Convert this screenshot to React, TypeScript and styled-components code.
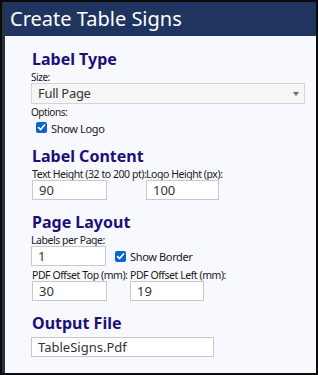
import React from "react";
import styled, { createGlobalStyle } from "styled-components";

const Global = createGlobalStyle`
  html, body { margin: 0; padding: 0; background: #000; }
  body { font-family: "Noto Sans", "Open Sans", sans-serif; }
  * { box-sizing: border-box; }
`;

const Frame = styled.div`
  width: 318px;
  height: 375px;
  border: 2px solid #0b0b0b;
  display: flex;
  background: #f8f9ff;
  overflow: hidden;
`;

const Strip = styled.div`
  width: 3px;
  flex: none;
  background: #27333e;
`;

const Main = styled.div`
  flex: 1;
  display: flex;
  flex-direction: column;
  min-width: 0;
`;

const Header = styled.header`
  height: 34px;
  background: #1f3560;
  color: #ffffff;
  font-size: 20px;
  line-height: 34px;
  padding-left: 5px;
  white-space: nowrap;
`;

const Body = styled.div`
  padding: 13px 11px 0 26px;
  display: flex;
  flex-direction: column;
`;

const Heading = styled.h2<{ $gap?: number }>`
  margin: ${(p) => p.$gap ?? 12}px 0 0 1px;
  font-size: 16px;
  line-height: 20px;
  font-weight: 700;
  color: #1c1078;
`;

const FieldLabel = styled.label<{ $small?: boolean }>`
  display: block;
  margin-top: 3px;
  font-family: "Noto Sans", sans-serif;
  font-size: ${(p) => (p.$small ? 10 : 10.5)}px;
  letter-spacing: -0.45px;
  line-height: 11px;
  color: #1a1a1a;
  white-space: nowrap;
`;

const SelectBox = styled.div`
  position: relative;
  height: 21px;
  border: 1px solid #d4d4d4;
  background: #f6f6f6;
  color: #333;
  font-size: 13px;
  letter-spacing: -0.3px;
  line-height: 19px;
  padding-left: 6px;
`;

const Arrow = styled.span`
  position: absolute;
  right: 5px;
  top: 8px;
  width: 0;
  height: 0;
  border-left: 3.5px solid transparent;
  border-right: 3.5px solid transparent;
  border-top: 4px solid #6b6b6b;
`;

const TextBox = styled.div<{ $w: number }>`
  width: ${(p) => p.$w}px;
  height: 20px;
  border: 1px solid #c9c9c9;
  background: #ffffff;
  color: #333;
  font-size: 13px;
  line-height: 18px;
  padding-left: 6px;
  white-space: nowrap;
`;

const CheckRow = styled.div<{ $indent?: number; $top?: number }>`
  display: flex;
  align-items: center;
  gap: 4px;
  margin-top: ${(p) => p.$top ?? 0}px;
  padding-left: ${(p) => p.$indent ?? 0}px;
`;

const Box = styled.span`
  width: 11px;
  height: 11px;
  border-radius: 2px;
  background: #0b63ce;
  display: flex;
  align-items: center;
  justify-content: center;
  flex: none;
`;

const CheckText = styled.span<{ $drop?: number }>`
  font-size: 11px;
  letter-spacing: -0.35px;
  line-height: 11px;
  color: #1a1a1a;
  padding-top: ${(p) => p.$drop ?? 0}px;
`;

const FieldRow = styled.div<{ $cols: string; $top?: number }>`
  display: grid;
  grid-template-columns: ${(p) => p.$cols};
  margin-top: ${(p) => p.$top ?? 0}px;
  margin-left: 1px;
`;

const InlineRow = styled.div`
  display: flex;
  align-items: center;
  gap: 9px;
`;

const Field = styled.div`
  display: flex;
  flex-direction: column;
`;

const OutputField = styled(Field)`
  margin-top: 4px;
`;

const Check = ({ label, indent, top, drop }: { label: string; indent?: number; top?: number; drop?: number }) => (
  <CheckRow $indent={indent} $top={top}>
    <Box>
      <svg width="9" height="9" viewBox="0 0 9 9">
        <path d="M1.6 4.6 L3.6 6.6 L7.5 1.9" fill="none" stroke="#fff" strokeWidth="1.6" strokeLinecap="round" strokeLinejoin="round" />
      </svg>
    </Box>
    <CheckText $drop={drop}>{label}</CheckText>
  </CheckRow>
);

export default function App() {
  return (
    <>
      <Global />
      <Frame>
        <Strip />
        <Main>
          <Header>Create Table Signs</Header>
          <Body>
            <Heading $gap={0}>Label Type</Heading>
            <FieldLabel $small>Size:</FieldLabel>
            <SelectBox>
              Full Page
              <Arrow />
            </SelectBox>
            <FieldLabel $small>Options:</FieldLabel>
            <Check label="Show Logo" indent={5} top={2} drop={3} />

            <Heading>Label Content</Heading>
            <FieldRow $cols="114px 1fr">
              <Field>
                <FieldLabel>Text Height (32 to 200 pt):</FieldLabel>
                <TextBox $w={75}>90</TextBox>
              </Field>
              <Field>
                <FieldLabel>Logo Height (px):</FieldLabel>
                <TextBox $w={73}>100</TextBox>
              </Field>
            </FieldRow>

            <Heading>Page Layout</Heading>
            <Field>
              <FieldLabel>Labels per Page:</FieldLabel>
              <InlineRow>
                <TextBox $w={75}>1</TextBox>
                <Check label="Show Border" />
              </InlineRow>
            </Field>
            <FieldRow $cols="98px 1fr" $top={1}>
              <Field>
                <FieldLabel>PDF Offset Top (mm):</FieldLabel>
                <TextBox $w={75}>30</TextBox>
              </Field>
              <Field>
                <FieldLabel>PDF Offset Left (mm):</FieldLabel>
                <TextBox $w={74}>19</TextBox>
              </Field>
            </FieldRow>

            <Heading>Output File</Heading>
            <OutputField>
              <TextBox $w={183}>TableSigns.Pdf</TextBox>
            </OutputField>
          </Body>
        </Main>
      </Frame>
    </>
  );
}
